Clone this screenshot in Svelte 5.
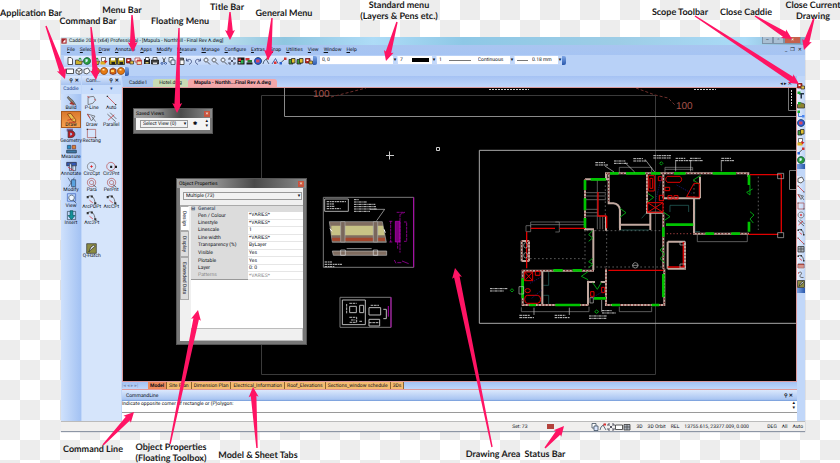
<script lang="ts">
  type Shape = [d: string, fill: string, stroke?: string];

  const icons: Record<string, Shape[]> = {
    page: [['M4 1h6l3 3v11H4z', '#fff', '#222']],
    open: [['M1 6h5l2 2h7l-2 7H1z', '#c9b02c', '#333'], ['M6 5l4-4 4 4z', '#178a2a']],
    globe: [['M8 1a7 7 0 1 0 .1 0z', '#2a9c3c', '#154'], ['M5 4l5 1-1 4-4 2z', '#d8f0ff']],
    save: [['M1 2h14v13H1z', '#b09a14', '#222'], ['M4 2h8v5H4z', '#fff'], ['M5 10h7v5H5z', '#222']],
    recover: [['M3 1h8v8H3z', '#fff', '#444'], ['M1 9h10v6H1z', '#e0b020'], ['M8 6l7 3-5 4z', '#d42020']],
    red: [['M1 3h9v9H1z', '#c42a20', '#611'], ['M8 8h7v6H8z', '#e8c040', '#333'], ['M3 5h4v3H3z', '#fff']],
    window: [['M2 2h10v8H2z', '#fff', '#a33'], ['M6 6h9v9H6z', '#efe3b0', '#a33'], ['M6 6h9v3H6z', '#c33']],
    plot: [['M2 4h12v10H2z', '#222'], ['M5 1h7v6H5z', '#fff', '#222'], ['M5 10h6v3H5z', '#d8cb70']],
    print: [['M1 6h14v8H1z', '#444', '#111'], ['M4 1h8v5H4z', '#fff', '#333'], ['M4 11h8v3H4z', '#ddd']],
    cut: [['M5 1l5 10M11 1L6 11', 'none', '#333'], ['M4 11a2 2 0 1 0 .1 0M11 11a2 2 0 1 0 .1 0', 'none', '#234a9a']],
    copy: [['M2 1h8v9H2z', '#fff', '#345'], ['M6 6h8v9H6z', '#dce8ff', '#345']],
    paste: [['M2 2h11v13H2z', '#777', '#222'], ['M6 6h8v9H6z', '#fff', '#333']],
    undo: [['M3 3v5h5M3 8c3-5 10-4 10 1 0 3-3 5-5 6', 'none', '#2b3c70']],
    redo: [['M13 3v5H8M13 8C10 3 3 4 3 9c0 3 3 5 5 6', 'none', '#2b3c70']],
    zoom: [['M6 2a4 4 0 1 0 .1 0zM9 10l5 5', '#e9f2ff', '#333']],
    extents: [['M2 6V2h4M10 2h4v4M14 10v4h-4M6 14H2v-4M5 5l6 6M11 5l-6 6', 'none', '#223']],
    picture: [['M1 1h14v14H1z', '#161616'], ['M3 3h5v5H3z', '#d33'], ['M8 6h5v7H8z', '#2fae4d'], ['M3 10h4v3H3z', '#ddd']],
    layers: [['M1 2h8v5H1z', '#c33'], ['M5 6h9v5H5z', '#2a7f2f'], ['M3 11h12v4H3z', '#222']],
    blue: [['M8 1a7 7 0 1 0 .1 0z', '#2a5be0', '#135'], ['M4 5h7v6H4z', '#d44a60']],
    pen: [['M2 14l2-6 7-6M8 4l6 10', 'none', '#345'], ['M9 1h5v4H9z', '#d33']],
    arrow: [['M2 14L9 3l5 10', 'none', '#23418c'], ['M6 9h5v5H6z', '#d33']],
    node: [['M2 13L13 3', 'none', '#333'], ['M1 10h5v5H1z', '#2b63d0'], ['M10 1h5v5h-5z', '#c33']],
    pack: [['M2 5h8v9H2z', '#3c9a3a', '#222'], ['M7 3h7v9H7z', '#e0c030', '#222']],
    box: [['M1 4h14v9H1z', '#fff', '#222']],
    cube: [['M2 6l6-4 6 3v7l-6 3-6-3z', '#f4f7fc', '#333'], ['M2 6l6 3 6-4M8 9v6', 'none', '#333']],
    poly: [['M2 5l8-3 4 7-6 5-6-2z', '#f4f7fc', '#333']],
    ball: [['M8 1a7 7 0 1 0 .1 0z', '#e67a12', '#8a3d00'], ['M5 4h4v3H5z', '#ffe9b0']],
    solid: [['M2 5l6-3 6 3v8l-6 2-6-2z', '#d86a10', '#622'], ['M4 6h6v4H4z', '#ffd060']],
    tee: [['M4 4h10v3h-4v8H7V7H4z', '#234'], ['M1 1h6v5H1z', '#1ba52c']],
    hill: [['M1 14V7l5-4 9 3v8z', '#8d8430', '#333'], ['M2 2h5v5H2z', '#1cb030']],
    axis: [['M3 4v9h11', 'none', '#2760d0'], ['M1 1h5v5H1z', '#1cb030'], ['M10 10h5v5h-5z', '#4a86f0']],
    brush: [['M3 2l7 6 4 6-6-3-6-7z', '#8a8578', '#444'], ['M8 9l5 6-8-2z', '#a5352a']],
    pencil: [['M2 3l5-1 7 9v4l-5-2z', '#e8c04c', '#7a2a10'], ['M2 12l9-2M4 15h9', 'none', '#b22']],
    geo: [['M1 1h9v4H1z', '#7a5c92'], ['M3 4v10h4c8 0 8-10 0-10z', '#b71d25', '#333'], ['M6 7v4c4 0 4-4 0-4z', '#9db9ea']],
    measure: [['M2 2h5v5H2z', '#2b91c8', '#246'], ['M9 2h5v5H9z', '#d88432', '#733'], ['M1 9h14v4H1z', '#3f79a7', '#234']],
    note: [['M1 2h14v5H1z', '#3358b6', '#223'], ['M5 4h3v10H5zM10 7h4v7h-4z', '#d2dff7', '#345'], ['M3 9l8 5', 'none', '#d12']],
    modify: [['M3 1l8 13M12 1L4 14', 'none', '#3b4c60'], ['M8 4h6v10H8z', '#5aa2df', '#346']],
    view: [['M2 1h12v11H2z', 'none', '#3e65c2'], ['M8 3a4 4 0 1 0 .1 0zM10 10l5 5', '#eef6ff', '#345']],
    insert: [['M2 2h12v12H2z', 'none', '#345'], ['M6 1h4v7h3l-5 6-5-6h3z', '#12929a', '#0b5b60']],
    pline: [['M3 14V3l8-1 3 5-4 5z', 'none', '#555'], ['M2 2l3 2M12 6l2 2', 'none', '#d22']],
    line: [['M2 2l12 12', 'none', '#c33'], ['M1 1h2v2H1zM13 13h2v2h-2z', '#333']],
    draw: [['M2 3l6 10 5-7zM8 6l6 8', 'none', '#555'], ['M2 3l4 6', 'none', '#d22']],
    parallel: [['M2 3l12 11M6 1l9 9', 'none', '#444'], ['M3 12l9-8', 'none', '#d22']],
    rect: [['M2 2h12v12H2z', 'none', '#a55'], ['M1 1h2v2H1zM13 13h2v2h-2z', '#333']],
    circle: [['M8 2a6 6 0 1 0 .1 0z', 'none', '#666'], ['M6 8h4M8 6v4', 'none', '#d11']],
    circle2: [['M7 2a6 6 0 1 0 .1 0z', 'none', '#b44'], ['M6 7h3v3H6zM13 7h3v3h-3z', '#222']],
    ring: [['M8 2a6 6 0 1 0 .1 0zM8 5a3 3 0 1 0 .1 0z', 'none', '#a44'], ['M10 11l5 4', 'none', '#333']],
    arc: [['M2 4c6-4 11 2 11 9', 'none', '#444'], ['M1 3h3v3H1zM7 2h3v3H7zM12 12h3v3h-3z', '#333'], ['M5 9l5 4', 'none', '#d22']],
    hatch: [['M1 1h14v14H1z', '#8c8b42', '#333'], ['M4 13l3-7 4-3 2 2-5 4z', '#e3e7ea', '#222']],
    wave: [['M3 4c6-5 8 2 4 4s0 6 6 5', 'none', '#444'], ['M2 3h2v2H2z', '#c33']],
    grid: [['M2 3h12v11H2z', '#aab2bd', '#333'], ['M2 8h12M8 3v11', 'none', '#444']],
    fan: [['M2 2h12v8H2z', '#c9584a', '#733'], ['M4 4v10M8 4v8M12 4v10', 'none', '#eee']],
  };

  const menus = ['File', 'Select', 'Draw', 'Annotate', 'Apps', 'Modify', 'Measure', 'Manage', 'Configure', 'Extras', 'Snap', 'Utilities', 'View', 'Window', 'Help'];

  const generalTools = [
    'page', 'open', 'globe', 'open', 'recover', 'save', 'save', 'red', 'window', 'plot',
    'print', 'cut', 'copy', 'paste', 'undo', 'redo', 'zoom', 'zoom', 'zoom', 'extents',
    'picture', 'layers', 'blue', 'pen', 'arrow', 'node', 'pack', 'pack', 'red',
  ];
  const solidTools = ['box', 'cube', 'poly', 'ball', 'ball', 'solid', 'ball'];
  const scopeTools = ['red', 'tee', 'hill', 'axis', 'blue', 'pack', 'recover', 'node', 'globe'];
  const drawTools = ['poly', 'line', 'draw', 'rect', 'circle', 'parallel', 'arc', 'line', 'grid', 'arc', 'fan', 'wave', 'hatch'];

  const appItems = [
    ['brush', 'Build'], ['pencil', 'Draw'], ['geo', 'Geometry'], ['measure', 'Measure'],
    ['note', 'Annotate'], ['modify', 'Modify'], ['view', 'View'], ['insert', 'Insert'],
  ];
  let activeApp = $state('Draw');

  const commandItems = [
    ['pline', 'P-Line'], ['line', 'Auto'],
    ['draw', 'Draw'], ['parallel', 'Parallel'],
    ['rect', 'Rectang'], null,
    null, null,
    ['circle', 'CircCpt'], ['circle2', 'Cir2Pnt'],
    ['ring', 'Para'], ['ring', 'PerPnt'],
    ['arc', 'ArcPDPt'], ['arc', 'ArcCPt'],
    ['arc', 'Arc2Pt'], null,
    null, null,
    ['hatch', 'Q-Hatch'], null,
  ];

  const drawings = ['Caddie1', 'Hotel.dwg', 'Mapula - Northh...Final Rev A.dwg'];
  let activeDrawing = $state(2);

  const sheets = ['Model', 'Site Plan', 'Dimension Plan', 'Electrical_Information', 'Roof_Elevations', 'Sections_window schedule', '3Ds'];
  let activeSheet = $state(0);

  const properties = [
    ['Pen / Colour', '*VARIES*'], ['Linestyle', '*VARIES*'], ['Linescale', '1'],
    ['Line width', '*VARIES*'], ['Transparency (%)', 'ByLayer'], ['Visible', 'Yes'],
    ['Plotable', 'Yes'], ['Layer', '0: 0'], ['Patterns', '*VARIES*'],
  ];
  const propertyTabs = ['Design', 'Display', 'Extended Data'];
  let propertyTab = $state('Design');

  const callouts = [
    { lines: ['Application Bar'], x: 31, y: 16, from: [46, 26], to: [65, 79] },
    { lines: ['Command Bar'], x: 88, y: 24, from: [91, 27], to: [96, 80] },
    { lines: ['Menu Bar'], x: 122, y: 13, from: [132, 15], to: [133, 52] },
    { lines: ['Floating Menu'], x: 180, y: 24, from: [179, 28], to: [177, 113] },
    { lines: ['Title Bar'], x: 227, y: 10, from: [230, 12], to: [230, 40] },
    { lines: ['General Menu'], x: 284, y: 16, from: [272, 18], to: [268, 60] },
    { lines: ['Standard menu', '(Layers & Pens etc.)'], x: 399, y: 8, from: [397, 22], to: [386, 61] },
    { lines: ['Scope Toolbar'], x: 680, y: 15, from: [695, 16], to: [799, 84] },
    { lines: ['Close Caddie'], x: 746, y: 15, from: [755, 16], to: [792, 39] },
    { lines: ['Close Current', 'Drawing'], x: 813, y: 8, from: [814, 18], to: [804, 50] },
    { lines: ['Command Line'], x: 93, y: 452, from: [103, 445], to: [134, 412] },
    { lines: ['Object Properties', '(Floating Toolbox)'], x: 171, y: 450, from: [170, 444], to: [198, 310] },
    { lines: ['Model & Sheet Tabs'], x: 258, y: 458, from: [257, 448], to: [253, 387] },
    { lines: ['Drawing Area'], x: 493, y: 457, from: [492, 447], to: [455, 268] },
    { lines: ['Status Bar'], x: 545, y: 457, from: [545, 448], to: [564, 426] },
  ];

  // tapered arrow: thin at the label, widest at the neck of the head
  function arrowPoints([x1, y1]: number[], [x2, y2]: number[]) {
    const length = Math.hypot(x2 - x1, y2 - y1);
    const ux = (x2 - x1) / length;
    const uy = (y2 - y1) / length;
    const at = (along: number, side: number) =>
      `${x1 + ux * along - uy * side},${y1 + uy * along + ux * side}`;
    const neck = length - 9;
    return [at(0, -0.7), at(neck, -2.8), at(neck - 1, -5), at(length, 0), at(neck - 1, 5), at(neck, 2.8), at(0, 0.7)].join(' ');
  }
</script>

{#snippet icon(name: string)}
  <svg class="icon" viewBox="0 0 16 16" aria-hidden="true">
    {#each icons[name] as [d, fill, stroke]}
      <path {d} {fill} stroke={stroke ?? 'none'} />
    {/each}
  </svg>
{/snippet}

{#snippet note(x: number, y: number, rows: number[])}
  {#each rows as width, i}
    <path class="note" d="M{x} {y + i * 7}h{width}" />
  {/each}
{/snippet}

<div class="stage">
  <div class="app">
    <header class="title-bar">
      <svg class="logo" viewBox="0 0 16 16" aria-hidden="true">
        <path d="M1 1h14v14H1z" fill="#a8262b" /><path d="M4 12L12 3v9z" fill="#fff" />
      </svg>
      <span class="title">Caddie 20xx (x64) Professional - [Mapula - Northhill - Final Rev A.dwg]</span>
      <div class="window-buttons">
        <button aria-label="Minimize">–</button>
        <button aria-label="Restore">▫</button>
        <button class="close" aria-label="Close Caddie">×</button>
      </div>
    </header>

    <nav class="menu-bar">
      {#each menus as menu}
        <button><u>{menu[0]}</u>{menu.slice(1)}</button>
      {/each}
      <div class="mdi">
        <button aria-label="Minimize drawing">_</button>
        <button aria-label="Restore drawing">❐</button>
        <button aria-label="Close drawing">✕</button>
      </div>
    </nav>

    <div class="toolbar-row">
      <div class="toolbar general">
        {#each generalTools as tool}
          <button aria-label={tool}>{@render icon(tool)}</button>
        {/each}
      </div>
      <span class="overflow"></span>
      <div class="toolbar standard">
        <label class="combo layer"><select aria-label="Layer"><option>0, 0</option></select></label>
        <label class="combo colour"><select aria-label="Pen"><option>7</option></select><i class="swatch"></i></label>
        <label class="combo style"><span>1</span><i class="rule"></i><select aria-label="Line style"><option>Continuous</option></select></label>
        <label class="combo weight"><i class="rule"></i><select aria-label="Line width"><option>0.18 mm</option></select></label>
      </div>
      <span class="overflow"></span>
    </div>

    <div class="toolbar-row second">
      <div class="toolbar solids">
        {#each solidTools as tool}
          <button aria-label={tool}>{@render icon(tool)}</button>
        {/each}
      </div>
      <span class="overflow"></span>
    </div>

    <div class="body">
      <aside class="panel app-bar">
        <div class="panel-head"><span></span><b>⚲</b><b>✕</b></div>
        <div class="panel-title">Caddie</div>
        <div class="items">
          {#each appItems as [glyph, name]}
            <button class:active={name === activeApp} onclick={() => (activeApp = name)}>
              {@render icon(glyph)}<span>{name}</span>
            </button>
          {/each}
        </div>
      </aside>

      <aside class="panel command-bar">
        <div class="panel-head"><span>Com...</span><b>⚲</b><b>✕</b></div>
        <div class="panel-title scroll"><span>▴</span><span>▾</span></div>
        <div class="items">
          {#each commandItems as item}
            {#if item}
              <button>{@render icon(item[0])}<span>{item[1]}</span></button>
            {:else}
              <i></i>
            {/if}
          {/each}
        </div>
      </aside>

      <main>
        <div class="drawing-tabs">
          {#each drawings as name, i}
            <button class:active={i === activeDrawing} onclick={() => (activeDrawing = i)}>{name}</button>
          {/each}
          <span class="tab-nav">◂ ▸ ✕</span>
        </div>

        <div class="canvas">
          <svg class="drawing" viewBox="123 88 673 293" aria-label="Drawing area">
            <g fill="none" stroke="#3a3a3a">
              <path d="M261.500 95.500H655.500V374.500H261.500z" />
              <path stroke="#8a8a8a" d="M284.500 88V116.500H796" />
              <path stroke="#70302c" stroke-dasharray="3 2" d="M331 97L366 88M636 88L655 95L668 98L676 106" />
              <path stroke="#777" d="M788.500 88V110.500H796M796 170.500H789.500V189.500H796" />
            </g>
            <text class="level" x="313" y="97">100</text>
            <text class="level" x="676" y="109">100</text>
            <g stroke="#ccc" stroke-dasharray="2 1"><path d="M489 89.500h40M694 89.500h22M791.500 90v16" /></g>
            <g stroke="#ccc" fill="none"><path d="M386 155.500h8M389.500 151.500v8M436.500 147.500h3v3h-3z" /></g>

            <!-- window elevation detail -->
            <g transform="translate(310 180) scale(.3333)" fill="none" stroke-width="2">
              <path stroke="#777" d="M40 52H311V262H40z" stroke-width="3" />
              <path stroke="#b000b0" stroke-width="3" d="M311 52V262" />
              <path stroke="#aaa" stroke-width="3" d="M44 57H115V94H44z" />
              {@render note(50, 65, [58, 22, 24, 42])}
              {@render note(132, 59, [14, 40, 64, 66, 70, 48])}
              <path stroke="#ccc" d="M180 88h44l-24 34" />
              <path fill="#806d60" stroke="#aaa" d="M58 125H217L229 187H67z" />
              <path fill="#c8c386" stroke="none" d="M64 137H219L224 166H64z" />
              <path fill="#a3472d" stroke="none" d="M66 173H225V183H67z" />
              <path fill="#79675c" stroke="#aaa" d="M92 125h13v61H92zM190 125h13v61h-13z" />
              <path stroke="#fff" stroke-width="3" d="M60 146l6 8M222 148l4 10" />
              <path fill="#806d60" stroke="#bbb" d="M67 213H230V226H70z" />
              <path stroke="#ddd" d="M92 210h14v16H92zM190 210h13v16h-13zM110 206h75" />
              <g stroke="#c000c0">
                <path fill="#7a007a" d="M256 124h14v62h-14z" />
                <path d="M242 124v62M238 124h10M238 186h10M282 126h8v58h-8M260 97h24l-13 6M270 103v115M263 186v20" stroke-dasharray="9 2" />
                <path d="M253 240l5 10M262 248h12M276 243l20 8" />
              </g>
              {@render note(44, 246, [22, 52, 30])}
            </g>

            <!-- joinery detail -->
            <g transform="translate(310 180) scale(.3333)" fill="none" stroke="#bbb" stroke-width="3">
              <path stroke="#777" d="M90 352H243V442H90z" />
              <path stroke="#b000b0" d="M243 352V442M235 378v32" />
              <path d="M97 360H166V434H97zM119 379h20v19h-20zM149 376h12v22h-12zM177 383h35v22h-35zM177 418h32v20h-32zM220 388h9v28h-9" />
              <path d="M118 370h22M110 372v28M182 376h25M177 428h32M118 412h22v15h-22M123 420h13M148 424h10" stroke-dasharray="8 2" />
            </g>

            <!-- ground floor plan -->
            <g transform="translate(470 130) scale(.3333)" fill="none" stroke-width="3">
              <path stroke="#aaa" d="M990 61H28V580H990" />
              <g stroke="#888" stroke-width="2">
                <path d="M448 128V112H545V128M585 128V112H668V122M585 118H668M154 532V545H357V530M448 530V545H545V530M682 314V335H832V314" />
                <path d="M182 290V276H343M182 284H343M168 305V287H182V305zM256 276h12v30h-12M382 150V298M348 188H408M348 198H408M348 209H408M348 238H384M348 248H384M348 258H408M390 258V298M398 258V298M448 240V295" />
                <path stroke-dasharray="5 7" d="M168 386H345M345 300V420M410 300V412M350 302H580M355 411H575M865 140V300M406 166V290M672 150V300M217 425V520" />
              </g>
              <g stroke="#2a6e68" stroke-width="2"><path d="M220 425H236V466H220M220 496H236V522M450 284H537M450 300H537M515 265L530 248M600 246V226H656V246M675 200V305H690" /></g>
              <g stroke="#c2a9a0" stroke-width="6">
                <path d="M408 150V130H835V140M345 148H416M345 148V298H372M416 130V220H430Q448 222 450 240V300M450 284H541V300M541 250V300M531 130V248H580M580 130V205M580 248V416M580 205H690M690 140V205M672 205V311H837M408 258V302M370 300V420M155 422H372M158 420V525H355M354 452V525M408 416V525H583V416M217 422V522M354 456H375M392 456H408M155 332V394M177 332V394M155 333H177M155 393H177M593 335H645M645 335V416H593M593 335V416" />
              </g>
              <g stroke="#7b3030" stroke-width="4" stroke-dasharray="4 6">
                <path d="M408 130H835M345 148V298M416 130V220M531 130V248M580 130V416M580 311H837M155 422H372M158 420V525H355M408 416V525H583V416M155 332V394M177 332V394M645 335V416" />
              </g>
              <g stroke="#00c400" stroke-width="8">
                <path d="M420 130h26M468 130h58M543 130h28M612 130h35M728 130h70M362 148h46M345 150v30M345 205v36M345 264v30M588 284h82M580 292v28M580 432v70M706 311h26M784 311h26M837 135v30M837 275v30M250 421h28M308 421h28M158 445v60M256 525h75M425 525h25M545 525h23M178 525h20M372 505h36" />
              </g>
              <g stroke="#00a010" stroke-width="3">
                <path d="M533 190l18 12-18 14M450 235l18 13-18 14M580 246l20 14-18 12M368 302l-12 12 12 10-12 10M368 385l-12 10 12 8-12 10M354 425l-20 14 20 10M368 458l14 20 12-20M582 350l-12 10 14 12-14 14 14 12M692 136l-22 14 20 14M840 165v30l-10-8 18-10M840 245l12 10-12 12 10 12M574 95l5 5-5 5-5-5zM126 476l5 5-5 5-5-5zM380 540l6 5-6 5-6-5z" />
              </g>
              <g stroke="#e00000">
                <path d="M182 295H255M268 295H345M384 186V258H410M410 258V295M170 305V415M415 421H580M593 411H645M640 335V411M840 134H935M835 313H925M934 134V308" stroke-width="4" />
                <path d="M535 137h18v46h-18zM540 145h8v30h-8zM565 140h10v12h-10zM568 196h12v16h-12zM533 218h46v29h-46zM533 218l46 29M579 218l-46 29M164 426h24v26h-24zM164 426l24 26M188 426l-24 26M196 424h14v12h-14zM165 482a8 6 0 1 0 16 0a8 6 0 1 0-16 0M172 496h30q10 0 10 12t-10 12h-30q-8 0-8-12t8-12M362 485h10v14h-10zM395 472h9v16h-9zM592 139h38q10 9 0 18h-38q-10-9 0-18M585 172h14v10h-14zM594 197h12v10h-12zM612 197h12v10h-12zM650 200l22-40h16v42z" />
              </g>
              <path stroke="#1c1c90" stroke-width="2" stroke-dasharray="4 3" d="M556 215L575 140M620 165L665 190M180 460L215 440M185 505L215 480M365 505L405 480" />
              <g stroke="#bbb" stroke-width="2"><path d="M161 346a6 8 0 1 0 12 0a6 8 0 1 0-12 0M161 376a6 8 0 1 0 12 0a6 8 0 1 0-12 0M487 406h18M496 398a8 8 0 1 0 .1 0M147 470h14v22h-14zM923 308h18v15h-18zM923 130h18v16h-18zM630 335h16v10h-16zM630 402h16v12h-16zM360 503h10v16h-10z" /></g>
              <g stroke="#ccc" stroke-width="2"><path d="M405 108L432 126M465 98L494 126M525 88L554 126M617 90V124M662 90V124M754 90V124M192 555V533M298 555V533M395 545V510" /></g>
              {@render note(376, 98, [30, 40])}
              {@render note(432, 93, [34, 42])}
              {@render note(490, 86, [30, 40])}
              {@render note(550, 77, [55, 52])}
              {@render note(617, 85, [30, 45])}
              {@render note(660, 85, [32, 38])}
              {@render note(754, 85, [30, 38])}
              {@render note(60, 476, [52, 42])}
              {@render note(148, 556, [32, 44])}
              {@render note(254, 556, [32, 46])}
              {@render note(357, 558, [55, 52])}
              {@render note(396, 542, [30, 42])}
            </g>
          </svg>

          <section class="floating saved-views">
            <header><span>Saved Views</span><button aria-label="Close saved views">×</button></header>
            <div class="views">
              <label class="combo boxed"><select aria-label="Saved view"><option>Select View (0)</option></select></label>
              <button class="gear" aria-label="View settings">✱</button>
              <span class="spin">▴<br />▾</span>
            </div>
          </section>

          <section class="floating object-properties">
            <header><span>Object Properties</span><button aria-label="Close object properties">×</button></header>
            <div class="props">
              <label class="combo boxed"><select aria-label="Selection"><option>Multiple (73)</option></select></label>
              <div class="props-main">
                <div class="side-tabs">
                  {#each propertyTabs as tab}
                    <button class:active={tab === propertyTab} onclick={() => (propertyTab = tab)}>{tab}</button>
                  {/each}
                </div>
                <div class="sheet">
                  <table>
                    <thead><tr><th class="gutter">⊟</th><th colspan="2">General</th></tr></thead>
                    <tbody>
                      {#each properties as [name, value]}
                        <tr class:muted={name === 'Patterns'}><td class="gutter"></td><th>{name}</th><td>{value}</td></tr>
                      {/each}
                    </tbody>
                  </table>
                  <div class="hint"></div>
                </div>
              </div>
            </div>
          </section>
        </div>

        <div class="sheet-tabs">
          <span class="sheet-nav">|◂ ◂ ▸ ▸|</span>
          {#each sheets as sheet, i}
            <button class:active={i === activeSheet} onclick={() => (activeSheet = i)}>{sheet}</button>
          {/each}
        </div>

        <div class="command-head"><span>CommandLine</span><b>⚲ ✕</b></div>
        <div class="command-log"><span>Indicate opposite corner of rectangle or (P)olygon:</span><span class="spin">▴<br />▾</span></div>
        <input class="command-input" aria-label="Command line" />
      </main>

      <aside class="scope">
        <div class="scope-group">
          {#each scopeTools as tool}
            <button aria-label={tool}>{@render icon(tool)}</button>
          {/each}
        </div>
        <span class="grip"></span>
        <div class="scope-group draw">
          {#each drawTools as tool}
            <button aria-label={tool}>{@render icon(tool)}</button>
          {/each}
        </div>
        <span class="grip"></span>
      </aside>
    </div>

    <footer class="status-bar">
      <span class="set">Set: 73</span>
      <i class="stop"></i>
      <span class="snaps">{@render icon('copy')}{@render icon('pen')}{@render icon('extents')}{@render icon('box')}{@render icon('grid')}</span>
      <span>3D</span>
      <span>3D Orbit</span>
      <span>REL</span>
      <span class="coords">13755.615, 23377.009, 0.000</span>
      <span>DEG</span>
      <span>All</span>
      <span>Auto</span>
    </footer>
  </div>

  <svg class="callouts" viewBox="0 0 840 463">
    {#each callouts as { lines, x, y, from, to }}
      <polygon points={arrowPoints(from, to)} />
      {#each lines as line, i}
        <text {x} y={y + i * 11}>{line}</text>
      {/each}
    {/each}
  </svg>
</div>

<style>
  :global(body) {
    margin: 0;
  }

  .stage {
    position: relative;
    box-sizing: border-box;
    min-height: 100vh;
    padding: 37px 35px 32px 61px;
    overflow: hidden;
    background: repeating-conic-gradient(#ededed 0 25%, #fff 0 50%) 0 0 / 40px 40px;
    font: 5px/6px Roboto, 'Noto Sans', sans-serif;
    color: #0c1018;
    text-rendering: geometricPrecision;
  }

  button,
  select,
  input {
    margin: 0;
    padding: 0;
    border: 0;
    border-radius: 0;
    background: none;
    font: inherit;
    color: inherit;
    text-rendering: inherit;
  }

  button {
    white-space: nowrap;
  }

  select {
    appearance: none;
    min-width: 0;
  }

  .icon {
    display: block;
    flex: none;
    width: 8px;
    height: 8px;
    stroke-width: 1.5;
  }

  .app {
    display: flex;
    flex-direction: column;
    background: #bcd4f8;
    box-shadow: 0 1px 1px #8d96a5;
  }

  .title-bar {
    display: flex;
    align-items: center;
    gap: 2px;
    height: 8px;
    background: linear-gradient(90deg, #d7e8ef, #b8dcec 22%, #8fc6e0 30%, #aedcf7 42%, #8ec8e6 54%, #9dcde6 75%, #aadbf7 92%, #7fa9c8);
  }

  .logo {
    width: 6px;
    height: 6px;
  }

  .title {
    flex: 1;
    white-space: nowrap;
  }

  .window-buttons {
    display: flex;
    align-self: stretch;
    margin-right: 4px;
  }

  .window-buttons button {
    width: 11px;
    height: 7px;
    background: #a9bfd3;
    border: 1px solid #7e93a8;
    border-top: 0;
    box-sizing: border-box;
    line-height: 6px;
  }

  .window-buttons .close {
    width: 17px;
    background: #c4604c;
    color: #fff;
  }

  .menu-bar {
    display: flex;
    align-items: center;
    gap: 5px;
    height: 10px;
    padding-left: 6px;
    background: linear-gradient(#a9c5f0, #a6c4f3);
  }

  .mdi {
    display: flex;
    gap: 3px;
    margin-left: auto;
    padding-right: 3px;
  }

  .toolbar-row {
    display: flex;
    align-items: center;
    height: 11px;
    padding-left: 3px;
    background: #b8d1f7;
  }

  .toolbar-row.second {
    height: 10px;
  }

  .toolbar {
    display: flex;
    justify-content: space-between;
    box-sizing: border-box;
    height: 9px;
    background: linear-gradient(#e4eefe, #c0d5f7);
  }

  .general {
    width: 249px;
    padding-left: 2px;
  }

  .solids {
    width: 61px;
    padding-left: 2px;
  }

  .standard {
    justify-content: flex-start;
    gap: 1px;
    margin-left: 3px;
  }

  .overflow {
    width: 4px;
    height: 9px;
    border-radius: 0 2px 2px 0;
    background: linear-gradient(#7fa7e6, #2a58ac);
  }

  .combo {
    position: relative;
    display: flex;
    align-items: center;
    gap: 4px;
    box-sizing: border-box;
    height: 8px;
    padding: 0 2px;
    background: #fff;
  }

  .combo::after {
    content: '▾';
    position: absolute;
    right: 0;
    top: 0;
    width: 4px;
    line-height: 8px;
    text-align: center;
    background: #c2d8fa;
  }

  .combo select {
    flex: 1;
  }

  .layer {
    width: 77px;
  }

  .colour {
    width: 38px;
    padding-right: 7px;
  }

  .style {
    width: 77px;
    gap: 7px;
    padding-right: 6px;
  }

  .weight {
    width: 47px;
  }

  .swatch {
    width: 17px;
    height: 4px;
    background: #000;
  }

  .rule {
    width: 22px;
    height: 1px;
    background: #777;
  }

  .weight .rule {
    width: 11px;
  }

  .boxed {
    border: 1px solid #999;
    background: #f2f2f2;
  }

  .boxed::after {
    line-height: 6px;
    background: none;
  }

  .body {
    display: grid;
    grid-template-columns: 20px 39px minmax(0, 1fr) 8px;
    column-gap: 1px;
    background: #c1d7f9;
  }

  .panel {
    background: linear-gradient(90deg, #cfe1fc, #a3c2f3);
  }

  .command-bar {
    background: #d6e5fb;
  }

  .panel-head {
    display: flex;
    align-items: center;
    gap: 2px;
    height: 9px;
    padding: 0 2px 0 4px;
    background: linear-gradient(#dbe8fc, #a7c3f0);
  }

  .panel-head span {
    flex: 1;
  }

  .panel-title {
    height: 9px;
    line-height: 9px;
    text-align: center;
    background: #c7dcfb;
    color: #24468c;
  }

  .scroll {
    display: flex;
    justify-content: space-around;
  }

  .items {
    display: grid;
    grid-auto-rows: 1fr;
    height: 131px;
    padding-top: 1px;
  }

  .command-bar .items {
    grid-template-columns: 1fr 1fr;
    height: 164px;
  }

  .items button {
    display: flex;
    flex-direction: column;
    align-items: center;
    justify-content: center;
    min-width: 0;
    line-height: 5px;
  }

  .items .icon {
    width: 11px;
    height: 11px;
    stroke-width: 1;
  }

  .items .active {
    background: linear-gradient(#d9762b, #f6a553);
    outline: 1px solid #a75a22;
    outline-offset: -1px;
  }

  main {
    display: flex;
    flex-direction: column;
    margin-right: -1px;
  }

  .drawing-tabs {
    display: flex;
    align-items: flex-end;
    height: 11px;
    padding-left: 1px;
    background: linear-gradient(#a5c2f3, #c0d6fa);
  }

  .drawing-tabs button {
    height: 8px;
    padding: 0 6px;
    border-radius: 3px 3px 0 0;
    background: #a9c6ef;
  }

  .drawing-tabs button:nth-child(2) {
    background: #c8dcb4;
  }

  .drawing-tabs .active {
    background: #f3a6a8;
    font-weight: 700;
  }

  .tab-nav {
    margin-left: auto;
    padding-right: 5px;
  }

  .canvas {
    position: relative;
    border: 1px solid #dd9a9c;
    background: #000;
  }

  .drawing {
    display: block;
    width: 100%;
  }

  .level {
    fill: #a5524a;
    font: 10px 'Liberation Sans', sans-serif;
  }

  .note {
    stroke: #ccc;
    stroke-width: 3;
    stroke-dasharray: 8 2 4 1;
  }

  .floating {
    position: absolute;
    box-sizing: border-box;
    border: 1px solid #555;
    background: #777;
  }

  .floating header {
    display: flex;
    align-items: center;
    justify-content: space-between;
    height: 9px;
    padding: 0 2px;
    background: linear-gradient(90deg, #a2a2a2, #8e8e8e 30%, #4a4a4a 60%, #8a8a8a);
    color: #000;
  }

  .floating header button {
    width: 6px;
    height: 6px;
    background: #c8543d;
    color: #fff;
  }

  .saved-views {
    left: 10px;
    top: 20px;
    width: 80px;
  }

  .views {
    display: flex;
    align-items: center;
    gap: 5px;
    height: 12px;
    margin: 0 2px 3px;
    padding-left: 4px;
    background: #f4f4f4;
  }

  .views .combo {
    width: 48px;
  }

  .gear {
    font-weight: 700;
  }

  .spin {
    margin-left: auto;
    padding-right: 2px;
    line-height: 5px;
  }

  .object-properties {
    left: 53px;
    top: 90px;
    width: 131px;
  }

  .props {
    display: flex;
    flex-direction: column;
    gap: 5px;
    margin: 0 3px 3px;
    padding-top: 4px;
    background: #f0f0f0;
  }

  .props > .combo {
    margin: 0 1px 0 3px;
  }

  .props-main {
    display: flex;
    gap: 2px;
    border-top: 1px solid #aaa;
  }

  .side-tabs {
    display: flex;
    flex-direction: column;
    width: 9px;
  }

  .side-tabs button {
    box-sizing: border-box;
    width: 9px;
    padding: 4px 1px;
    border: 1px solid #aaa;
    background: #ddd;
    writing-mode: vertical-rl;
  }

  .side-tabs .active {
    background: #fff;
    border-right-color: #fff;
  }

  .sheet {
    display: flex;
    flex: 1;
    flex-direction: column;
    justify-content: space-between;
    height: 135px;
    background: #fff;
  }

  table {
    width: 100%;
    height: 74px;
    border-collapse: collapse;
    border-bottom: 1px solid #999;
  }

  th,
  td {
    padding: 0;
    line-height: 6px;
    text-align: left;
    font-weight: 400;
  }

  th {
    width: 50px;
    background: #dcdcdc;
  }

  td {
    padding-left: 1px;
    border-bottom: 1px solid #e6e6e6;
  }

  thead th {
    color: #4b5a70;
    font-weight: 600;
  }

  th.gutter,
  td.gutter {
    width: 6px;
    background: #dcdcdc;
    border: 0;
  }

  .muted {
    color: #888;
  }

  .hint {
    height: 11px;
    border: 1px solid #bbb;
    background: #f0f0f0;
  }

  .sheet-tabs {
    display: flex;
    align-items: center;
    height: 8px;
    background: linear-gradient(#a4c2f4, #c0d7fa);
    border-bottom: 1px solid #dd9a9c;
    box-sizing: border-box;
  }

  .sheet-nav {
    width: 26px;
    color: #7d93b8;
    white-space: nowrap;
  }

  .sheet-tabs button {
    height: 7px;
    padding: 0 2px;
    background: #f5bb70;
    border-right: 1px solid #8b6430;
  }

  .sheet-tabs .active {
    background: #f08a5c;
    font-weight: 700;
  }

  .command-head {
    display: flex;
    align-items: center;
    justify-content: space-between;
    height: 11px;
    padding: 0 4px;
    background: linear-gradient(#dbe8fc, #a9c5f2 85%, #6f97d6);
  }

  .command-log {
    display: flex;
    height: 11px;
    background: #fff;
    border-bottom: 1px solid #9a9a9a;
  }

  .command-input {
    height: 8px;
    background: #fff;
  }

  .scope {
    margin-top: 6px;
  }

  .scope-group {
    display: flex;
    flex-direction: column;
    justify-content: space-between;
    height: 82px;
    background: linear-gradient(90deg, #e8f0fe, #bcd2f5);
  }

  .scope-group.draw {
    height: 112px;
    margin-top: 7px;
  }

  .grip {
    display: block;
    height: 5px;
    background: linear-gradient(90deg, #7fa7e6, #2a58ac);
  }

  .status-bar {
    display: flex;
    align-items: center;
    gap: 5px;
    height: 9px;
    padding: 0 2px 0 0;
    background: #f0efee;
    border-top: 1px solid #bbb;
  }

  .set {
    flex: 1;
    text-align: right;
  }

  .stop {
    width: 7px;
    height: 5px;
    margin: 0 32px 0 15px;
    background: #b3423c;
  }

  .snaps {
    display: flex;
  }

  .coords {
    width: 78px;
    white-space: nowrap;
  }

  .callouts {
    position: absolute;
    inset: 0;
    width: 100%;
    height: 100%;
    pointer-events: none;
  }

  .callouts polygon {
    fill: #ff1464;
  }

  .callouts text {
    fill: #1a1a1a;
    font: 700 9px Lato, sans-serif;
    text-anchor: middle;
  }
</style>
